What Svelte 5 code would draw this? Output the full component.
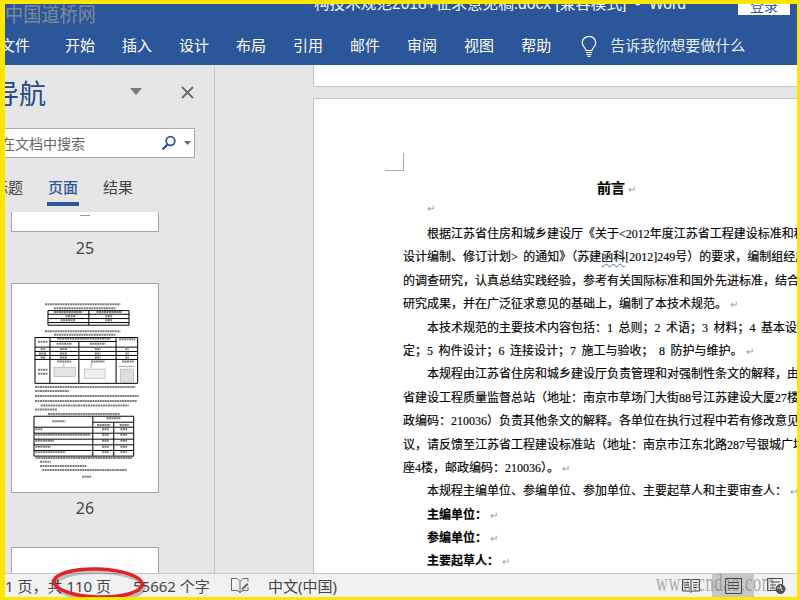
<script>
  const tabs = ['开始', '插入', '设计', '布局', '引用', '邮件', '审阅', '视图', '帮助'];
  const lines = [
    { t: '根据江苏省住房和城乡建设厅《关于<2012年度江苏省工程建设标准和科', i: true },
    { t: '设计编制、修订计划> 的通知》（苏建', w: '函科', a: '[2012]249号）的要求，编制组经广泛' },
    { t: '的调查研究，认真总结实践经验，参考有关国际标准和国外先进标准，结合国内' },
    { t: '研究成果，并在广泛征求意见的基础上，编制了本技术规范。', r: true },
    { t: '本技术规范的主要技术内容包括：1 总则；2 术语；3 材料；4 基本设计规', i: true },
    { t: '定；5 构件设计；6 连接设计；7 施工与验收；  8 防护与维护。', r: true },
    { t: '本规程由江苏省住房和城乡建设厅负责管理和对强制性条文的解释，由江苏', i: true },
    { t: '省建设工程质量监督总站（地址：南京市草场门大街88号江苏建设大厦27楼，邮' },
    { t: '政编码：210036）负责其他条文的解释。各单位在执行过程中若有修改意见和建' },
    { t: '议，请反馈至江苏省工程建设标准站（地址：南京市江东北路287号银城广场B' },
    { t: '座4楼，邮政编码：210036）。', r: true },
    { t: '本规程主编单位、参编单位、参加单位、主要起草人和主要审查人：', i: true, r: true },
    { t: '主编单位：', i: true, r: true, b: true },
    { t: '参编单位：', i: true, r: true, b: true },
    { t: '主要起草人：', i: true, r: true, b: true }
  ];
  const textBars = [
    [133, 105, 360], [160, 117, 345], [133, 186, 360], [160, 197, 345],
    [103, 354, 405], [103, 366, 205], [103, 381, 415], [103, 396, 410],
    [120, 410, 385], [103, 422, 170], [142, 435, 358],
    [105, 568, 395], [118, 579, 150], [118, 592, 258], [125, 604, 380], [245, 624, 272]
  ];
  const cellBars = [
    [160, 128, 245], [288, 128, 365], [195, 141, 225], [315, 141, 335], [180, 153, 225], [315, 153, 335],
    [112, 218, 142], [170, 209, 330], [356, 210, 405], [168, 224, 215], [268, 224, 315],
    [120, 240, 135], [178, 240, 200], [283, 240, 300], [375, 240, 385],
    [115, 253, 138], [178, 253, 200], [283, 253, 300], [375, 253, 385],
    [120, 265, 135], [178, 265, 200], [283, 265, 300], [375, 265, 385],
    [112, 302, 142], [112, 314, 142], [170, 277, 212], [272, 277, 312], [365, 277, 400],
    [155, 457, 195], [318, 448, 360], [290, 468, 330], [358, 468, 385],
    [104, 481, 125], [104, 498, 270], [104, 516, 160], [104, 534, 150], [104, 550, 195],
    [305, 481, 325], [305, 498, 325], [305, 516, 325], [305, 534, 325], [305, 550, 325],
    [360, 481, 380], [360, 498, 380], [360, 516, 380], [360, 534, 380], [360, 550, 380]
  ];
</script>

<div class="app">
  <header class="ribbon">
    <div class="titlebar">
      <span class="title">构技术规范2018+征求意见稿.docx [兼容模式]  -  Word</span>
      <span class="login">登录</span>
    </div>
    <nav class="tabs">
      <span class="file">文件</span>
      {#each tabs as tab}<span>{tab}</span>{/each}
      <svg class="bulb" width="16" height="21" viewBox="0 0 16 21" fill="none" stroke="#fff" stroke-width="1.2">
        <path d="M5 14.5c0-2.5-3.8-4-3.8-7.7a6.8 6.5 0 0 1 13.6 0c0 3.7-3.8 5.2-3.8 7.7z" />
        <path d="M5 16.5h6M5.5 18.5h5M6.5 20.3h3" />
      </svg>
      <span class="tell">告诉我你想要做什么</span>
    </nav>
  </header>

  <main class="body">
    <aside class="nav">
      <div class="nav-head">
        <h2>导航</h2>
        <svg class="caret" width="12" height="7" viewBox="0 0 12 7"><path d="M0 0h12L6 7z" fill="#7a7a7a" /></svg>
        <svg class="close" width="13" height="13" viewBox="0 0 13 13" stroke="#6b6b6b" stroke-width="1.8"><path d="M1 1l11 11M12 1L1 12" /></svg>
      </div>
      <div class="search">
        <span class="search-text">在文档中搜索</span>
        <svg width="16" height="16" viewBox="0 0 16 16" fill="none" stroke="#2b579a"><circle cx="9.5" cy="6" r="4.3" stroke-width="1.8" /><path d="M6.5 9.5L1.5 14.5" stroke-width="2.4" /></svg>
        <svg class="mini" width="7" height="4" viewBox="0 0 7 4"><path d="M0 0h7L3.5 4z" fill="#666" /></svg>
      </div>
      <div class="nav-tabs">
        <span class="t1">标题</span>
        <span class="active">页面</span>
        <span>结果</span>
      </div>
      <div class="thumbs">
        <div class="thumb cut"><i></i></div>
        <div class="label">25</div>
        <div class="thumb full">
          <svg width="147" height="208" viewBox="35 44 440 626" fill="none">
            <g stroke="#5f5f5f" stroke-width="6" stroke-dasharray="6 1.5" opacity="0.8">
              {#each textBars as b}<path d="M{b[0]} {b[1]}H{b[2]}" />{/each}
              {#each cellBars as b}<path d="M{b[0]} {b[1]}H{b[2]}" />{/each}
            </g>
            <g stroke="#000" stroke-width="3">
              <path d="M142 124H386V168H142zM142 135H386M142 148H386M142 160H386M265 124V168" />
              <path d="M103 205H412V343H103zM103 234H412M103 247H412M103 259H412M103 271H412M148 205V343M347 205V343M148 217H347M235 217V343" />
              <path d="M100 442H400V562H100zM100 475H400M100 493H400M100 511H400M100 528H400M100 545H400M277 442V562M277 460H400M340 460V562" />
            </g>
            <g stroke="#9a9a9a" stroke-width="1.5">
              <rect x="160" y="295" width="65" height="28" fill="#e4e4e4" />
              <rect x="252" y="300" width="62" height="28" fill="#eee" />
              <rect x="360" y="300" width="40" height="40" fill="#ddd" />
              <path d="M355 292H402M190 283V293M272 283V296" stroke="#444" />
            </g>
          </svg>
        </div>
        <div class="label">26</div>
        <div class="thumb"></div>
      </div>
    </aside>

    <section class="doc">
      <div class="prev-page"></div>
      <article class="page">
        <span class="corner"></span>
        <h1>前言<b class="ret">↵</b></h1>
        <p class="blank"><b class="ret">↵</b></p>
        {#each lines as l}
          <p class:indent={l.i} class:bold={l.b}>{l.t}{#if l.w}<span class="wavy">{l.w}</span>{l.a}{/if}{#if l.r}<b class="ret">↵</b>{/if}</p>
        {/each}
      </article>
    </section>
  </main>

  <footer class="status">
    <span class="pages">1 页，共 110 页</span>
    <span class="words">55662 个字</span>
    <svg class="edit" width="18" height="15" viewBox="0 0 18 15" fill="none" stroke="#666"><path d="M9 3.5L6 .5H.5v12H6l3 2V3.5zM9 3.5l3-3h5v3M17 9v3.5h-5L9 14.5" /><path d="M11 10l5-5 1.5 1.5-5 5-2 .5z" fill="#666" stroke="none" /></svg>
    <span class="lang">中文(中国)</span>
    <div class="views">
      <svg width="18" height="15" viewBox="0 0 18 15" fill="none" stroke="#444"><path d="M.5 1.5h7.5l1 1 1-1h7.5v11.500h-7l-1.500 1.500-1.500-1.500h-7zM9 2.500v11M2.500 4.500h4.500M2.500 7h4.500M2.500 9.500h4.500M11 4.500h4.500M11 7h4.500M11 9.500h4.500" /></svg>
      <div class="view-on"><svg width="17" height="16" viewBox="0 0 17 16" fill="none" stroke="#444"><path d="M.5 .5h16v15H.5zM3 4.500h11M3 7.500h11M3 10.500h11" /></svg></div>
      <svg width="19" height="16" viewBox="0 0 19 16" fill="none" stroke="#444"><path d="M10 12.500H.5V.5h15v6M3 4h10M3 7h6M3 10h5" /><circle cx="13.500" cy="11" r="4.500" fill="#555" /><path d="M10 10h4l1 3M13 7l1 3" stroke="#ddd" /></svg>
    </div>
  </footer>

  <div class="wm-top">中国道桥网</div>
  <div class="wm-bottom">www.cndao.com</div>
  <svg class="ring" width="110" height="40" viewBox="0 0 110 40" fill="none">
    <ellipse cx="57" cy="19" rx="44" ry="14" stroke="#000" stroke-opacity="0.22" stroke-width="4" transform="rotate(2 57 19)" />
    <ellipse cx="55" cy="16" rx="44" ry="14" stroke="#e2212a" stroke-width="3.5" transform="rotate(2 55 16)" />
  </svg>
</div>

<style>
  :global(body) { margin: 0; }
  .app {
    position: relative;
    width: 800px;
    height: 600px;
    box-sizing: border-box;
    border: solid #ffe600;
    border-width: 4px 3px 3px 5px;
    display: flex;
    flex-direction: column;
    overflow: hidden;
    background: #e6e6e6;
    font-family: "Noto Sans CJK SC", "Noto Sans", sans-serif;
  }
  .ribbon { background: #2b579a; color: #fff; height: 61px; flex: none; overflow: hidden; }
  .titlebar { display: flex; height: 22px; align-items: flex-start; }
  .title {
    margin: -12px 0 0 309px;
    font: 15.6px/24px "Liberation Sans", "Noto Sans CJK SC", sans-serif;
    white-space: pre;
    opacity: 0.96;
  }
  .login {
    position: absolute;
    left: 733px;
    top: -8px;
    width: 52px;
    height: 19px;
    background: #fff;
    color: #2b579a;
    font-size: 14px;
    line-height: 18px;
    text-align: center;
  }
  .tabs {
    display: flex;
    align-items: center;
    gap: 27px;
    height: 37px;
    margin-left: -5px;
    font-size: 15px;
    white-space: nowrap;
  }
  .tabs span { line-height: 20px; }
  .file { width: 29px; margin-right: 9px; }
  .bulb { margin: 3px 0 0 3px; }
  .tell { margin-left: -14px; font-size: 15px; color: #e6ecf5; }

  .body { flex: 1; min-height: 0; display: flex; }
  .nav {
    flex: none;
    width: 210px;
    box-sizing: border-box;
    margin-top: 2px;
    border-right: 1px solid #c6c6c6;
    overflow: hidden;
  }
  .nav-head { position: relative; height: 61px; }
  .nav-head h2 {
    margin: 0;
    padding: 8px 0 0 0;
    position: absolute;
    left: -13px;
    font-size: 27px;
    font-weight: 400;
    line-height: 36px;
    color: #1f4a8d;
    white-space: nowrap;
  }
  .caret { position: absolute; left: 125px; top: 21px; }
  .close { position: absolute; left: 176px; top: 19px; }
  .search {
    display: flex;
    align-items: center;
    box-sizing: border-box;
    width: 190px;
    height: 30px;
    background: #fff;
    border: 1px solid #ababab;
    border-left: 0;
    overflow: hidden;
  }
  .search-text { margin-left: -4px; width: 160px; font-size: 14px; color: #666; white-space: nowrap; flex: none; }
  .mini { margin-left: 7px; flex: none; }
  .search svg:first-of-type { flex: none; }
  .nav-tabs {
    display: flex;
    gap: 25px;
    height: 53px;
    margin-left: -12px;
    padding-top: 16px;
    box-sizing: border-box;
    font-size: 15px;
    line-height: 26px;
    color: #444;
  }
  .nav-tabs .active { color: #2b579a; font-weight: 500; position: relative; }
  .nav-tabs .active::after {
    content: "";
    position: absolute;
    left: -1px;
    right: -1px;
    top: 28px;
    height: 4px;
    background: #2b579a;
  }
  .nav-tabs span { width: 30px; flex: none; }
  .thumbs { padding: 1px 0 0 6px; }
  .thumb {
    box-sizing: border-box;
    width: 148px;
    height: 60px;
    background: #fff;
    border: 1px solid #a0a5ad;
  }
  .thumb.cut { height: 20px; border-top: 0; display: flex; justify-content: center; }
  .thumb.cut i { display: block; width: 10px; height: 1px; margin-top: 3px; background: #999; }
  .thumb.full { height: 210px; }
  .thumb.full svg { display: block; }
  .label { height: 51px; padding-top: 5px; box-sizing: border-box; text-align: center; width: 148px; font: 16px/22px "Noto Sans", sans-serif; color: #444; }
  .thumb.full + .label { height: 54px; padding-top: 4px; }

  .doc { flex: 1; min-width: 0; padding-left: 98px; display: flex; flex-direction: column; overflow: hidden; }
  .prev-page { height: 22px; flex: none; box-sizing: border-box; background: #fff; border: solid #c6c6c6; border-width: 0 0 1px 1px; }
  .page {
    position: relative;
    flex: 1;
    margin-top: 11px;
    box-sizing: border-box;
    background: #fff;
    border: solid #c6c6c6;
    border-width: 1px 0 0 1px;
    padding-left: 89px;
    color: #000;
    font: 12px/23.4px "Liberation Serif", "Noto Sans CJK SC", serif;
    word-spacing: 2.5px;
    -webkit-text-stroke: 0.15px #000;
    overflow: hidden;
  }
  .corner {
    position: absolute;
    left: 71px;
    top: 54px;
    width: 18px;
    height: 17px;
    border: solid #aaa;
    border-width: 0 1px 1px 0;
  }
  .page h1 { margin: 75px 0 0 194px; font: 700 14px/26px "Noto Sans CJK SC", sans-serif; white-space: nowrap; }
  .page p { margin: 0; height: 23.4px; white-space: nowrap; }
  .page p.blank { margin-left: 21px; height: 21px; line-height: 12px; }
  .page p.indent { padding-left: 24px; }
  .page p.bold { font-weight: 700; }
  .ret { font-weight: 400; font-size: 10px; color: #999; margin-left: 3px; -webkit-text-stroke: 0; }
  .wavy { text-decoration: underline wavy #3a6fc4 1px; text-underline-offset: 2px; }

  .status {
    flex: none;
    height: 24px;
    box-sizing: border-box;
    display: flex;
    align-items: center;
    background: #f1f1f1;
    border-top: 1px solid #c6c6c6;
    font-size: 15px;
    color: #444;
    white-space: nowrap;
    font-family: "Noto Sans", "Noto Sans CJK SC", sans-serif;
  }
  .pages { width: 128px; flex: none; }
  .words { width: 98px; flex: none; }
  .edit { flex: none; }
  .lang { margin-left: 19px; flex: 1; }
  .views { display: flex; flex: none; align-items: center; height: 23px; margin-right: 11px; }
  .views > svg { flex: none; }
  .view-on { width: 42px; height: 23px; margin: 0 13px 0 12px; background: #c6c6c6; display: flex; align-items: center; justify-content: center; flex: none; }

  .wm-top {
    position: absolute;
    left: 0;
    top: -4px;
    font-size: 18px;
    line-height: 26px;
    letter-spacing: 0.2px;
    color: rgba(140, 145, 150, 0.9);
    white-space: nowrap;
    z-index: 2;
    transform: scaleY(1.15);
  }
  .wm-bottom {
    position: absolute;
    left: 651px;
    top: 566px;
    font: 25px/26px "Liberation Serif", serif;
    color: rgba(120, 120, 120, 0.6);
    transform: scaleX(0.66);
    transform-origin: 0 0;
    white-space: nowrap;
    letter-spacing: 1px;
  }
  .ring { position: absolute; left: 38px; top: 563px; }
</style>
